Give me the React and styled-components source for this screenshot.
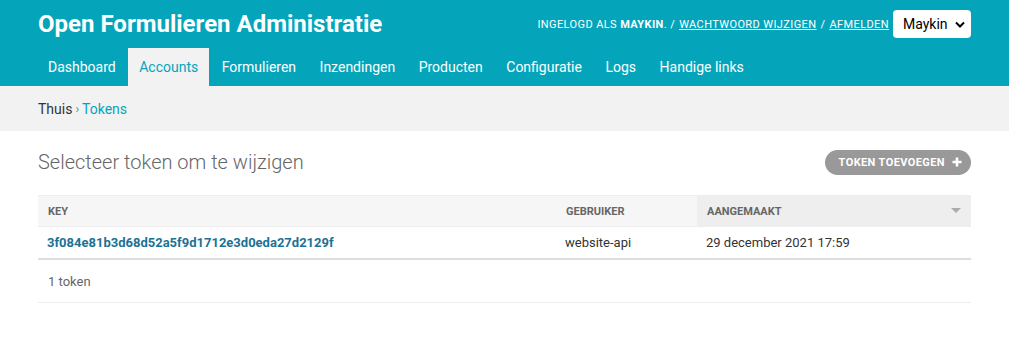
import React from 'react';
import styled, { createGlobalStyle } from 'styled-components';

const GlobalStyle = createGlobalStyle`
  body {
    margin: 0;
    font-family: Roboto, "Liberation Sans", sans-serif;
    background: #fff;
    color: #333;
  }
`;

const Header = styled.header`
  background: #04a5bb;
  color: #fff;
  padding: 0 38px;
`;

const Branding = styled.div`
  display: flex;
  align-items: center;
  justify-content: space-between;
  height: 48px;
`;

const SiteName = styled.h1`
  margin: 0;
  font-size: 24px;
  font-weight: 700;
`;

const UserTools = styled.div`
  display: flex;
  align-items: center;
  font-size: 11px;
  letter-spacing: 0.4px;
  text-transform: uppercase;
  gap: 4px;
`;

const ToolLink = styled.a`
  color: #fff;
  text-decoration: underline;
`;

const Select = styled.div`
  display: flex;
  align-items: center;
  justify-content: space-between;
  width: 62px;
  height: 28px;
  padding: 0 6px 0 10px;
  background: #fff;
  border-radius: 4px;
  color: #000;
  font-size: 14px;
  text-transform: none;
  letter-spacing: 0;
`;

const Nav = styled.nav`
  display: flex;
  gap: 1.5px;
  height: 38px;
  margin-left: -1px;
`;

const NavItem = styled.a`
  display: flex;
  align-items: center;
  padding: 0 11px;
  font-size: 14px;
  color: ${({ $active }) => ($active ? '#04a5bb' : '#fff')};
  background: ${({ $active }) => ($active ? '#f2f2f2' : 'transparent')};
  text-decoration: none;
`;

const Breadcrumbs = styled.div`
  background: #f2f2f2;
  height: 45px;
  display: flex;
  align-items: center;
  padding: 0 38px;
  font-size: 14px;
  color: #333;
`;

const Crumb = styled.a`
  color: #04a5bb;
  text-decoration: none;
`;

const Sep = styled.span`
  color: #04a5bb;
  margin: 0 3px;
  font-size: 12px;
`;

const Content = styled.main`
  padding: 17px 38px 0;
`;

const TitleRow = styled.div`
  display: flex;
  align-items: center;
  justify-content: space-between;
  height: 28px;
  margin-bottom: 19px;
`;

const PageTitle = styled.h2`
  margin: 0;
  font-size: 20px;
  font-weight: 300;
  color: #666;
`;

const AddButton = styled.a`
  display: flex;
  align-items: center;
  gap: 7px;
  height: 25px;
  padding: 0 9px 0 14px;
  border-radius: 13px;
  background: #999;
  color: #fff;
  font-size: 11px;
  font-weight: 700;
  letter-spacing: 0.4px;
  text-transform: uppercase;
`;

const Table = styled.table`
  width: 100%;
  border-collapse: collapse;
  font-size: 13px;
`;

const Th = styled.th`
  text-align: left;
  height: 30px;
  padding: 0 10px;
  font-size: 11px;
  font-weight: 700;
  color: #666;
  text-transform: uppercase;
  background: ${({ $sorted }) => ($sorted ? '#eeeeee' : '#f6f6f6')};
  border-top: 1px solid #eee;
  border-bottom: 1px solid #eee;
  width: ${({ $w }) => $w || 'auto'};
`;

const SortHead = styled.div`
  display: flex;
  align-items: center;
  justify-content: space-between;
`;

const Td = styled.td`
  height: 31px;
  padding: 0 9px;
  border-bottom: 2px solid #ddd;
  color: #333;
`;

const KeyLink = styled.a`
  color: #1b7295;
  font-weight: 700;
  text-decoration: none;
`;

const Paginator = styled.p`
  margin: 0;
  height: 42px;
  display: flex;
  align-items: center;
  padding: 0 10px;
  font-size: 13px;
  color: #666;
  border-bottom: 1px solid #eee;
`;

const navItems = ['Dashboard', 'Accounts', 'Formulieren', 'Inzendingen', 'Producten', 'Configuratie', 'Logs', 'Handige links'];

export default function App() {
  return (
    <>
      <GlobalStyle />
      <Header>
        <Branding>
          <SiteName>Open Formulieren Administratie</SiteName>
          <UserTools>
            <span>Ingelogd als <strong>Maykin</strong>. /</span>
            <ToolLink>Wachtwoord wijzigen</ToolLink>
            <span>/</span>
            <ToolLink>Afmelden</ToolLink>
            <Select>
              <span>Maykin</span>
              <svg width="10" height="7" viewBox="0 0 10 7">
                <path d="M1 1.5 L5 5.5 L9 1.5" stroke="#000" strokeWidth="2" fill="none" />
              </svg>
            </Select>
          </UserTools>
        </Branding>
        <Nav>
          {navItems.map((item) => (
            <NavItem key={item} $active={item === 'Accounts'}>{item}</NavItem>
          ))}
        </Nav>
      </Header>
      <Breadcrumbs>
        Thuis<Sep>›</Sep><Crumb>Tokens</Crumb>
      </Breadcrumbs>
      <Content>
        <TitleRow>
          <PageTitle>Selecteer token om te wijzigen</PageTitle>
          <AddButton>
            Token toevoegen
            <svg width="10" height="10" viewBox="0 0 10 10">
              <path d="M5 0.5 V9.5 M0.5 5 H9.5" stroke="#fff" strokeWidth="2.6" />
            </svg>
          </AddButton>
        </TitleRow>
        <Table>
          <thead>
            <tr>
              <Th $w="498px">Key</Th>
              <Th $w="121px">Gebruiker</Th>
              <Th $sorted>
                <SortHead>
                  Aangemaakt
                  <svg width="10" height="6" viewBox="0 0 10 6">
                    <path d="M0 0 H10 L5 5 Z" fill="#aaa" />
                  </svg>
                </SortHead>
              </Th>
            </tr>
          </thead>
          <tbody>
            <tr>
              <Td><KeyLink>3f084e81b3d68d52a5f9d1712e3d0eda27d2129f</KeyLink></Td>
              <Td>website-api</Td>
              <Td>29 december 2021 17:59</Td>
            </tr>
          </tbody>
        </Table>
        <Paginator>1 token</Paginator>
      </Content>
    </>
  );
}
